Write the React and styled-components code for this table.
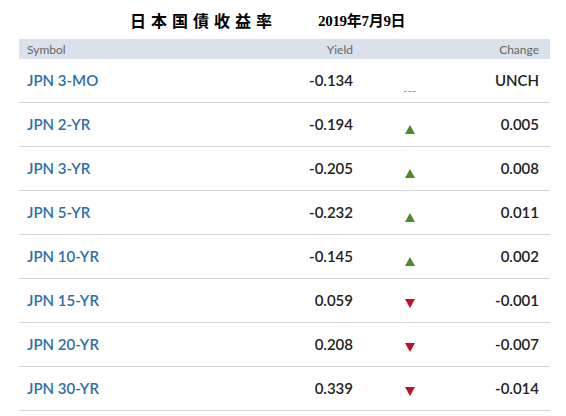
import React from 'react'
import styled, { createGlobalStyle } from 'styled-components'

const GlobalStyle = createGlobalStyle`
  body {
    margin: 0;
    background: #fff;
    font-family: Lato, "Open Sans", sans-serif;
  }
`

const Page = styled.div`
  width: 566px;
  height: 416px;
  padding: 0 16px 0 19px;
  box-sizing: border-box;
`

const Title = styled.div`
  height: 39px;
  display: flex;
  align-items: center;
  gap: 41px;
  padding-left: 111px;
  font-family: "Liberation Serif", "Noto Sans CJK JP", serif;
  font-weight: 700;
  font-size: 16px;
  color: #000;
  .name {
    letter-spacing: 5px;
  }
  .date {
    font-size: 15px;
    letter-spacing: -0.3px;
  }
`

const Grid = styled.div`
  display: grid;
  grid-template-columns: 1fr 147px 40px 109px;
  align-items: center;
  padding: 0 11px 0 8px;
`

const Header = styled(Grid)`
  height: 20px;
  background: #d9e2ea;
  font-size: 12px;
  color: #666;
`

const Row = styled(Grid)`
  box-sizing: border-box;
  height: 44px;
  padding-bottom: 2px;
  border-bottom: 1px solid #d3d6da;
  font-size: 15px;
  font-weight: 600;
  color: #222;
`

const Symbol = styled.div`
  color: #2d6ea6;
`

const Num = styled.div`
  text-align: right;
  padding-right: ${p => (p.$gap ? '37px' : '0')};
`

// arrows sit a little under the text line
const Mark = styled.div`
  display: flex;
  justify-content: center;
  transform: translateY(${p => p.$dy}px);
`

const Tri = styled.div`
  width: 0;
  height: 0;
  border-left: 5px solid transparent;
  border-right: 5px solid transparent;
  ${p => (p.$up
    ? 'border-bottom: 9px solid #4d8a2c;'
    : 'border-top: 9px solid #c0102a;')}
`

const Dash = styled.div`
  font-family: "DejaVu Sans", sans-serif;
  font-size: 11px;
  font-weight: 400;
  color: #999;
  letter-spacing: 0.5px;
`

const rows = [
  ['JPN 3-MO', '-0.134', 0, 'UNCH'],
  ['JPN 2-YR', '-0.194', 1, '0.005'],
  ['JPN 3-YR', '-0.205', 1, '0.008'],
  ['JPN 5-YR', '-0.232', 1, '0.011'],
  ['JPN 10-YR', '-0.145', 1, '0.002'],
  ['JPN 15-YR', '0.059', -1, '-0.001'],
  ['JPN 20-YR', '0.208', -1, '-0.007'],
  ['JPN 30-YR', '0.339', -1, '-0.014'],
]

export default function App() {
  return (
    <Page>
      <GlobalStyle />
      <Title>
        <span className="name">日本国債收益率</span>
        <span className="date">2019年7月9日</span>
      </Title>
      <Header>
        <div>Symbol</div>
        <Num $gap>Yield</Num>
        <div />
        <Num>Change</Num>
      </Header>
      {rows.map(([sym, y, dir, ch]) => (
        <Row key={sym}>
          <Symbol>{sym}</Symbol>
          <Num $gap>{y}</Num>
          {dir === 0 ? (
            <Mark $dy={11}><Dash>---</Dash></Mark>
          ) : (
            <Mark $dy={dir > 0 ? 6 : 4}><Tri $up={dir > 0} /></Mark>
          )}
          <Num>{ch}</Num>
        </Row>
      ))}
    </Page>
  )
}
